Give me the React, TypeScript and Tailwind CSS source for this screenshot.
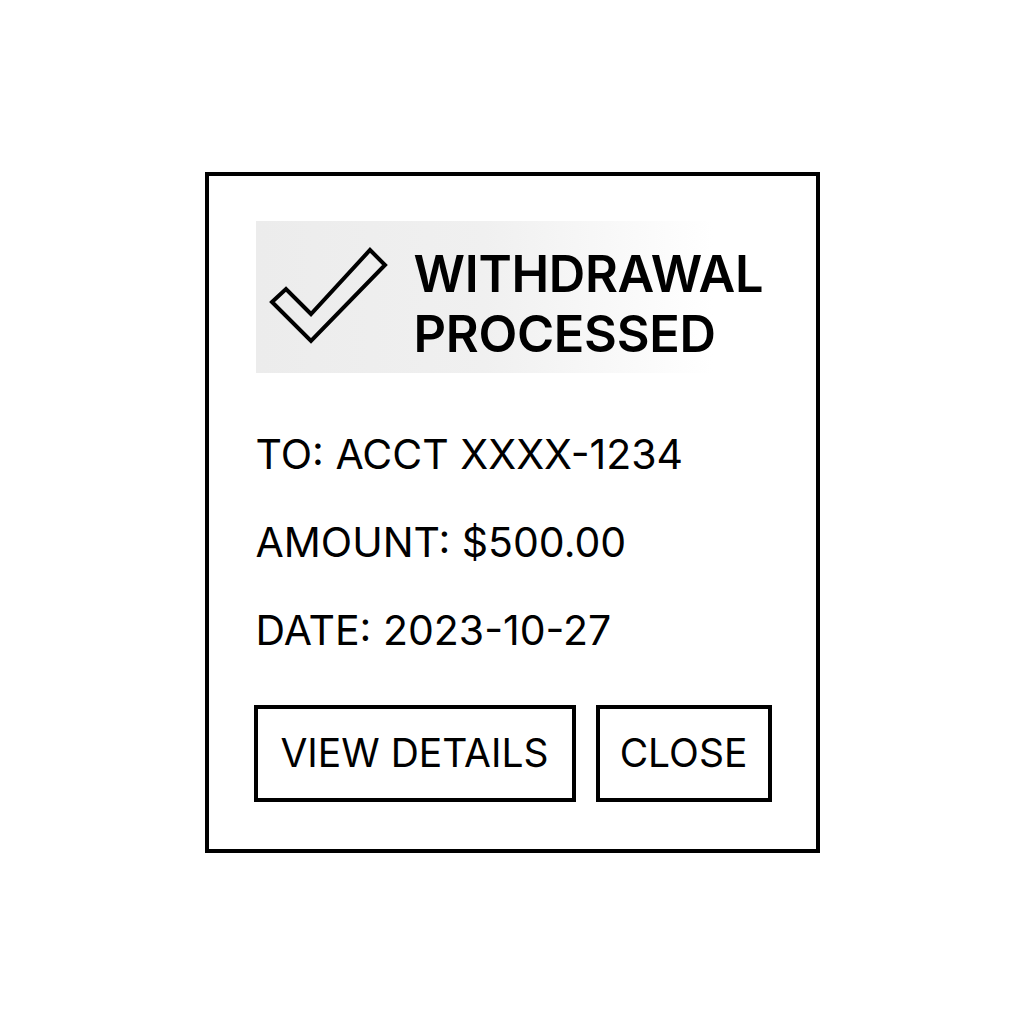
import React from "react";

const font = { fontFamily: "Inter, 'Liberation Sans', sans-serif" };

export default function App() {
  return (
    <div className="w-[1024px] h-[1024px] bg-white flex items-center justify-center" style={font}>
      <div className="w-[615px] h-[681px] border-4 border-black bg-white pl-[47px] pt-[45px] flex flex-col">
        <div className="w-[457px] h-[152px] bg-gradient-to-r from-[#ececec] via-[#f0f0f0] to-white flex items-start">
          <svg width="158" height="152" viewBox="0 0 158 152" className="shrink-0">
            <polygon
              points="16,81 30,68 55,93 114,29 129,44 55,120"
              fill="none"
              stroke="#000"
              strokeWidth="4"
              strokeLinejoin="miter"
            />
          </svg>
          <div className="mt-[23px] text-[50.5px] leading-[60px] font-semibold text-black tracking-[-0.3px]">
            <div>WITHDRAWAL</div>
            <div>PROCESSED</div>
          </div>
        </div>
        <div className="mt-[37px] text-[41px] leading-[88px] text-black">
          <div>TO: ACCT XXXX-1234</div>
          <div>AMOUNT: $500.00</div>
          <div>DATE: 2023-10-27</div>
        </div>
        <div className="mt-[31px] flex gap-[20px] -ml-[2px]">
          <div className="w-[322px] h-[97px] border-4 border-black flex items-center justify-center text-[39px] text-black">
            VIEW DETAILS
          </div>
          <div className="w-[176px] h-[97px] border-4 border-black flex items-center justify-center text-[39px] text-black">
            CLOSE
          </div>
        </div>
      </div>
    </div>
  );
}
